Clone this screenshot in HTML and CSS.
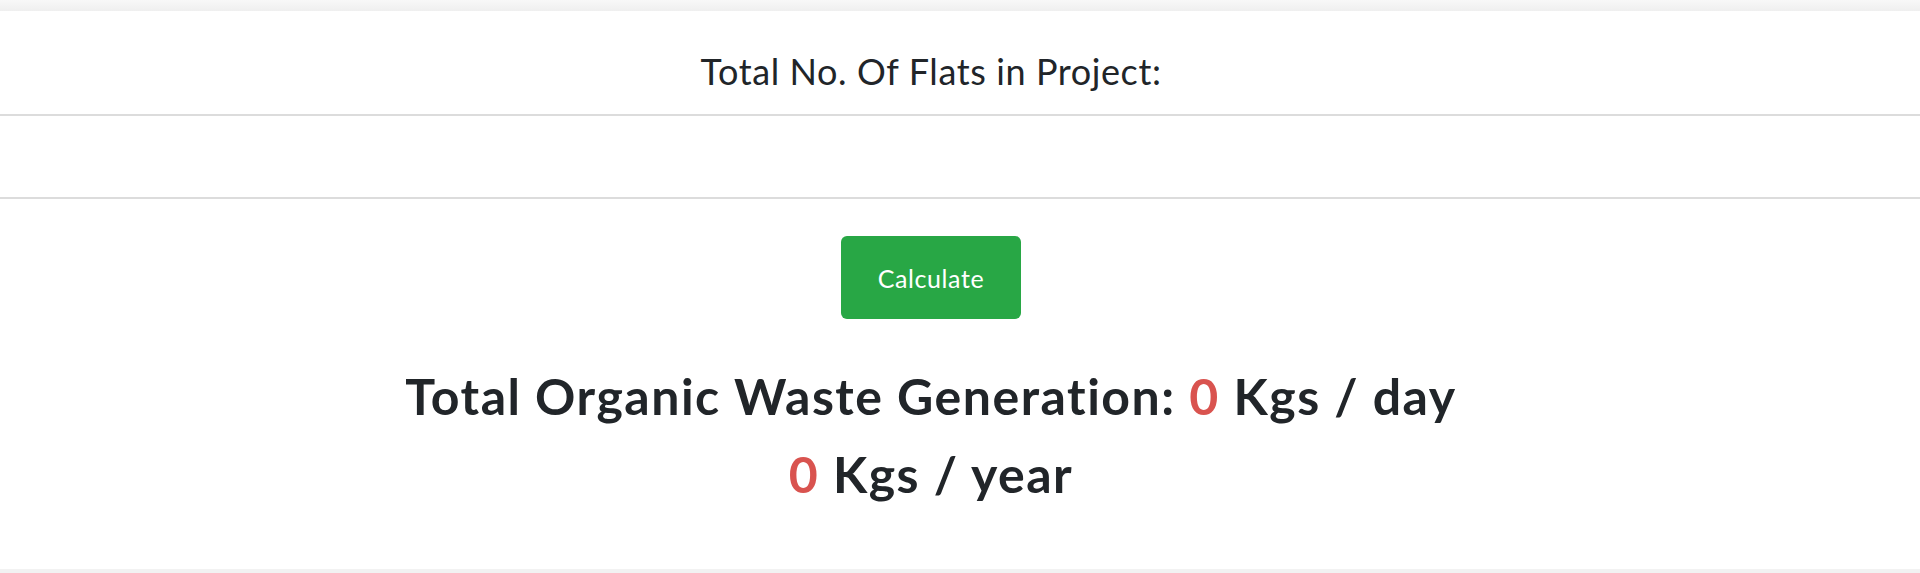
FILE: index.html
```html
<!DOCTYPE html>
<html lang="en">
<head>
  <meta charset="UTF-8">
  <title>Organic Waste Calculator</title>
  <link rel="stylesheet" href="styles.css">
</head>
<body>

  <div class="top-band"></div>

  <!-- Waste Calculator -->
  <div class="calc-card">
    <form id="wasteForm">
      <label for="flats" class="flats-label centered">Total No. Of Flats in Project:</label>
      <input type="number" id="flats" class="flats-input" />
      <div class="btn-row centered">
        <button type="submit" class="calc-btn">Calculate</button>
      </div>
    </form>

    <h2 class="result centered">
      Total Organic Waste Generation: <span class="num" id="perDay">0</span> Kgs / day<br>
      <span class="num" id="perYear">0</span> Kgs / year
    </h2>
  </div>

  <div class="bottom-band"></div>

  <script>
    // 0.5 kg of organic waste per flat each day
    document.getElementById('wasteForm').addEventListener('submit', function (e) {
      e.preventDefault();
      const flats = parseInt(document.getElementById('flats').value, 10) || 0;
      const perDay = flats * 0.5;
      document.getElementById('perDay').textContent = perDay;
      document.getElementById('perYear').textContent = perDay * 365;
    });
  </script>

</body>
</html>
```

FILE: styles.css
```css
body {
  margin: 0;
  font-family: Lato, "Noto Sans", sans-serif;
  color: #212529;
  background-color: #f2f2f2;
}
.top-band {
  height: 11px;
  background: linear-gradient(#f8f8f8, #efefef);
}
.calc-card {
  background: #fff;
  height: 558px;
  text-align: center;
}
.centered {
  padding-right: 58px;
}
.flats-label {
  display: block;
  font-size: 36px;
  letter-spacing: 0.6px;
  line-height: 44px;
  padding-top: 38px;
  height: 65px;
}
.flats-input {
  display: block;
  box-sizing: border-box;
  width: 100%;
  height: 85px;
  margin: 0;
  border: none;
  border-top: 2px solid #dcdcdc;
  border-bottom: 2px solid #dcdcdc;
  font-size: 24px;
  outline: none;
}
.btn-row {
  padding-top: 37px;
}
.calc-btn {
  width: 180px;
  height: 83px;
  border: none;
  border-radius: 6px;
  background-color: #28a745;
  color: #fff;
  font-family: inherit;
  font-size: 25px;
  letter-spacing: 0.6px;
  cursor: pointer;
}
.result {
  margin: 38px 0 0;
  font-size: 50px;
  font-weight: 700;
  letter-spacing: 1.5px;
  line-height: 78px;
}
.num {
  color: #d9534f;
}
```
